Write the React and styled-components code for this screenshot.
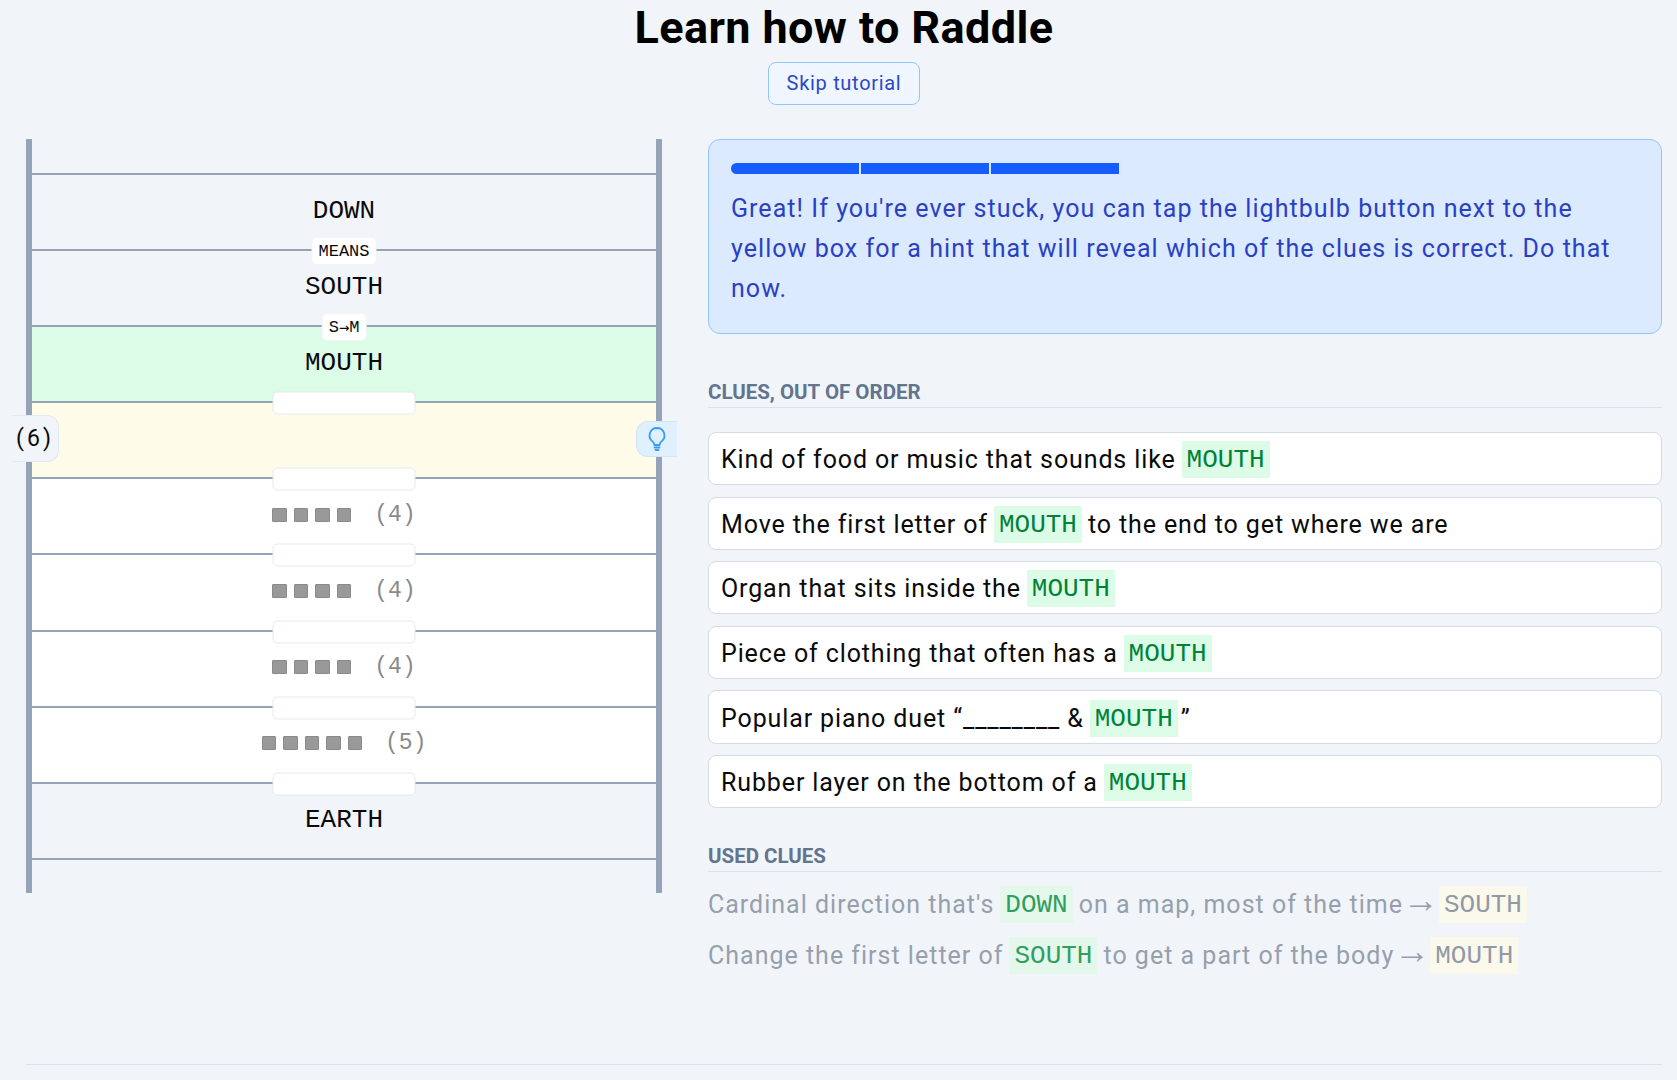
import styled, { createGlobalStyle } from "styled-components";

const sans = `Roboto, "Liberation Sans", sans-serif`;
const mono = `"Liberation Mono", "DejaVu Sans Mono", monospace`;

const GlobalStyle = createGlobalStyle`
  html, body {
    margin: 0;
    padding: 0;
    background: #f1f5f9;
    overflow: hidden;
  }
  * {
    box-sizing: border-box;
  }
`;

const Page = styled.div`
  width: 1688px;
  height: 1080px;
  padding: 0 26px;
  font-family: ${sans};
  color: #0a0a0a;
`;

const Header = styled.header`
  display: flex;
  flex-direction: column;
  align-items: center;
  height: 139px;
  padding-top: 3px;
`;

const Title = styled.h1`
  margin: 0;
  font-size: 45px;
  line-height: 50px;
  letter-spacing: 0.4px;
  font-weight: 700;
  color: #000;
`;

const SkipButton = styled.button`
  margin-top: 9px;
  width: 152px;
  height: 43px;
  padding: 0 0 2px;
  font-family: ${sans};
  font-size: 20px;
  letter-spacing: 0.7px;
  color: #2b48c8;
  background: #eff6ff;
  border: 1px solid #93c5fd;
  border-radius: 8px;
`;

const Columns = styled.main`
  display: grid;
  grid-template-columns: 636px 954px;
  column-gap: 46px;
  align-items: start;
`;

const Ladder = styled.section`
  position: relative;
  height: 754px;
  padding: 34px 0;
  border-left: 6px solid #94a3b8;
  border-right: 6px solid #94a3b8;
`;

const rowColors = {
  plain: "transparent",
  green: "#dcfce7",
  yellow: "#fefce8",
  white: "#fff",
};

const Row = styled.div`
  position: relative;
  height: 76.1px;
  display: flex;
  align-items: center;
  justify-content: center;
  border-top: 2px solid #94a3b8;
  background: ${(p) => rowColors[p.$tone]};
  &:last-of-type {
    height: 2px;
  }
`;

const Word = styled.span`
  margin-top: -2px;
  font-family: ${mono};
  font-size: 26px;
  line-height: 30px;
  color: #0a0a0a;
`;

const Tag = styled.span`
  position: absolute;
  left: 50%;
  top: 0;
  transform: translate(-50%, -50%);
  display: flex;
  align-items: center;
  justify-content: center;
  min-width: ${(p) => (p.$blank ? "143px" : "0")};
  height: ${(p) => (p.$blank ? "23px" : "28px")};
  padding: 0 6px;
  font-family: ${mono};
  font-size: 17px;
  background: #fff;
  border: 1px solid ${(p) => (p.$blank ? "#e5e9ef" : "#f1f5f9")};
  border-radius: 5px;
`;

const TagArrow = styled.span`
  font-family: "DejaVu Sans Mono", monospace;
`;

const Blanks = styled.div`
  display: flex;
  align-items: center;
  gap: 7px;
  margin-top: -3px;
`;

const Square = styled.span`
  width: 14.5px;
  height: 14.5px;
  background: #999;
  border: 1px solid #8a8a8a;
  border-radius: 1px;
`;

const Count = styled.span`
  margin-left: 16px;
  font-family: ${mono};
  font-size: 23px;
  color: #8a8a8a;
`;

const LengthBadge = styled.div`
  position: absolute;
  left: -20px;
  top: 276px;
  width: 47px;
  height: 47px;
  display: flex;
  align-items: center;
  justify-content: center;
  font-size: 23px;
  letter-spacing: 3px;
  background: #f1f5f9;
  border: 1px solid #e2e8f0;
  border-left: 0;
  border-radius: 0 12px 12px 0;
`;

const HintButton = styled.button`
  position: absolute;
  right: -21px;
  top: 282px;
  width: 41px;
  height: 36px;
  padding: 0;
  display: flex;
  align-items: center;
  justify-content: center;
  background: #dff0ff;
  border: 1px solid #d3e4f5;
  border-right: 0;
  border-radius: 12px 0 0 12px;
`;

const Side = styled.section`
  display: flex;
  flex-direction: column;
`;

const Panel = styled.div`
  height: 195px;
  padding: 23px 22px;
  background: #dbeafe;
  border: 1px solid #93c5fd;
  border-radius: 12px;
`;

const Progress = styled.div`
  display: flex;
  gap: 2px;
  height: 11px;
  overflow: hidden;
  width: 388px;
  border-radius: 6px 0 0 6px;
`;

const Step = styled.span`
  flex: 1;
  background: #155dfc;
`;

const PanelText = styled.p`
  margin: 15px 0 0;
  font-size: 25px;
  line-height: 40px;
  letter-spacing: 1.05px;
  color: #2a40c4;
`;

const SectionTitle = styled.h2`
  margin: ${(p) => p.$top}px 0 0;
  padding-bottom: 3px;
  font-size: 20.5px;
  line-height: 24px;
  font-weight: 700;
  color: #62748e;
  border-bottom: 1px solid #d9e0ea;
`;

const ClueList = styled.div`
  display: flex;
  flex-direction: column;
  gap: 11.3px;
  margin-top: 24px;
`;

const Clue = styled.div`
  height: 53.3px;
  padding: 2px 12px 0;
  display: flex;
  align-items: center;
  white-space: pre;
  font-size: 25px;
  letter-spacing: 0.88px;
  color: #0a0a0a;
  background: #fff;
  border: 1px solid #d5dbe4;
  border-radius: 8px;
`;

const Highlight = styled.span`
  display: inline-block;
  margin: 0 6px;
  padding: 0 5px;
  height: 37px;
  line-height: 39px;
  font-family: ${mono};
  font-size: 26px;
  letter-spacing: 0;
  color: ${(p) => (p.$tone === "green" ? "#008236" : "inherit")};
  background: ${(p) => (p.$tone === "green" ? "#dcfce7" : "#fefce8")};
`;

const MutedHighlight = styled(Highlight)`
  color: ${(p) => (p.$tone === "green" ? "#2f9e5f" : "#9199a6")};
  background: ${(p) => (p.$tone === "green" ? "#e3f8eb" : "#fbf9ec")};
`;

const ClosingQuote = styled.span`
  margin-left: -3px;
`;

const UsedList = styled.div`
  display: flex;
  flex-direction: column;
  gap: 14px;
  margin-top: 14px;
`;

const Used = styled.div`
  height: 37px;
  display: flex;
  align-items: center;
  white-space: pre;
  font-size: 25px;
  letter-spacing: 1px;
  color: #979fad;
`;

const Arrow = styled.span`
  margin: -10px -6px 0 0;
  font-family: "Liberation Sans", sans-serif;
  font-size: 36px;
  line-height: 1;
  letter-spacing: 0;
`;

const Footer = styled.hr`
  position: absolute;
  left: 26px;
  top: 1064px;
  width: 1636px;
  margin: 0;
  border: 0;
  border-top: 1px solid #d9e0ea;
`;

const clues = [
  ["Kind of food or music that sounds like", ""],
  ["Move the first letter of", "to the end to get where we are"],
  ["Organ that sits inside the", ""],
  ["Piece of clothing that often has a", ""],
  ["Popular piano duet “________ &", <ClosingQuote>”</ClosingQuote>],
  ["Rubber layer on the bottom of a", ""],
];

function Bulb() {
  return (
    <svg width="24" height="26" viewBox="0 0 24 26" fill="none" stroke="#3b9bf5" strokeWidth="1.8" strokeLinecap="round">
      <path d="M12 2a7.5 7.5 0 0 0-4.6 13.4c1.3 1 1.9 2.4 2.1 3.6h5c.2-1.2.8-2.6 2.1-3.6A7.5 7.5 0 0 0 12 2z" />
      <path d="M9.5 21.5h5M10.5 24h3" />
    </svg>
  );
}

function Unknown({ size }) {
  return (
    <Blanks>
      {Array.from({ length: size }, (_, i) => (
        <Square key={i} />
      ))}
      <Count>({size})</Count>
    </Blanks>
  );
}

export default function App() {
  return (
    <Page>
      <GlobalStyle />
      <Header>
        <Title>Learn how to Raddle</Title>
        <SkipButton>Skip tutorial</SkipButton>
      </Header>
      <Columns>
        <Ladder>
          <Row $tone="plain">
            <Word>DOWN</Word>
          </Row>
          <Row $tone="plain">
            <Tag>MEANS</Tag>
            <Word>SOUTH</Word>
          </Row>
          <Row $tone="green">
            <Tag>
              S<TagArrow>→</TagArrow>M
            </Tag>
            <Word>MOUTH</Word>
          </Row>
          <Row $tone="yellow">
            <Tag $blank />
          </Row>
          <Row $tone="white">
            <Tag $blank />
            <Unknown size={4} />
          </Row>
          <Row $tone="white">
            <Tag $blank />
            <Unknown size={4} />
          </Row>
          <Row $tone="white">
            <Tag $blank />
            <Unknown size={4} />
          </Row>
          <Row $tone="white">
            <Tag $blank />
            <Unknown size={5} />
          </Row>
          <Row $tone="plain">
            <Tag $blank />
            <Word>EARTH</Word>
          </Row>
          <Row $tone="plain" />
          <LengthBadge>(6)</LengthBadge>
          <HintButton>
            <Bulb />
          </HintButton>
        </Ladder>
        <Side>
          <Panel>
            <Progress>
              <Step />
              <Step />
              <Step />
            </Progress>
            <PanelText>
              Great! If you're ever stuck, you can tap the lightbulb button next to the yellow box for a hint that will
              reveal which of the clues is correct. Do that now.
            </PanelText>
          </Panel>
          <SectionTitle $top={46}>CLUES, OUT OF ORDER</SectionTitle>
          <ClueList>
            {clues.map(([before, after]) => (
              <Clue key={before}>
                {before}
                <Highlight $tone="green">MOUTH</Highlight>
                {after}
              </Clue>
            ))}
          </ClueList>
          <SectionTitle $top={36}>USED CLUES</SectionTitle>
          <UsedList>
            <Used>
              Cardinal direction that's
              <MutedHighlight $tone="green">DOWN</MutedHighlight>
              on a map, most of the time
              <Arrow>→</Arrow>
              <MutedHighlight $tone="yellow">SOUTH</MutedHighlight>
            </Used>
            <Used>
              Change the first letter of
              <MutedHighlight $tone="green">SOUTH</MutedHighlight>
              to get a part of the body
              <Arrow>→</Arrow>
              <MutedHighlight $tone="yellow">MOUTH</MutedHighlight>
            </Used>
          </UsedList>
        </Side>
      </Columns>
      <Footer />
    </Page>
  );
}
